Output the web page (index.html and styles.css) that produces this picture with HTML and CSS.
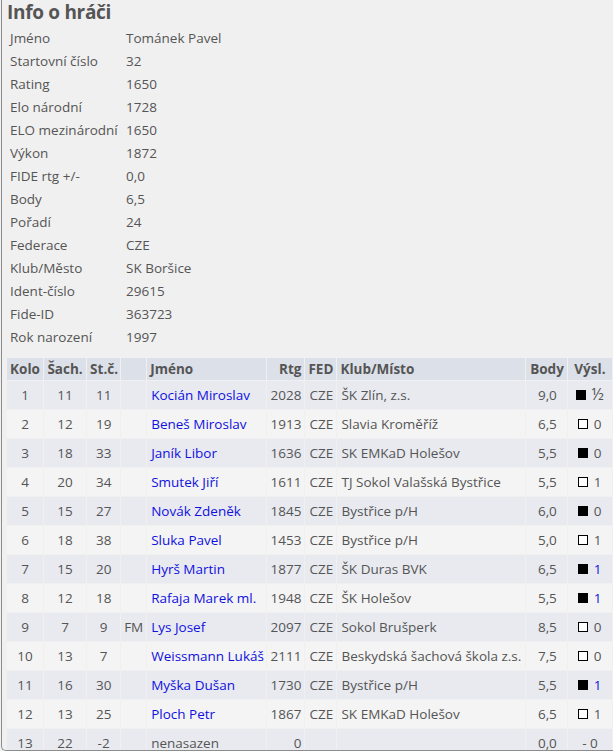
FILE: index.html
```
<!DOCTYPE html>
<html lang="cs">
<head>
<meta charset="utf-8">
<title>Info o hráči</title>
<link rel="stylesheet" href="styles.css">
</head>
<body>
<div class="panel">
  <h2 class="title">Info o hráči</h2>
  <table class="info">
    <tr><td class="lbl">Jméno</td><td>Tománek Pavel</td></tr>
    <tr><td class="lbl">Startovní číslo</td><td>32</td></tr>
    <tr><td class="lbl">Rating</td><td>1650</td></tr>
    <tr><td class="lbl">Elo národní</td><td>1728</td></tr>
    <tr><td class="lbl">ELO mezinárodní</td><td>1650</td></tr>
    <tr><td class="lbl">Výkon</td><td>1872</td></tr>
    <tr><td class="lbl">FIDE rtg +/-</td><td>0,0</td></tr>
    <tr><td class="lbl">Body</td><td>6,5</td></tr>
    <tr><td class="lbl">Pořadí</td><td>24</td></tr>
    <tr><td class="lbl">Federace</td><td>CZE</td></tr>
    <tr><td class="lbl">Klub/Město</td><td>SK Boršice</td></tr>
    <tr><td class="lbl">Ident-číslo</td><td>29615</td></tr>
    <tr><td class="lbl">Fide-ID</td><td>363723</td></tr>
    <tr><td class="lbl">Rok narození</td><td>1997</td></tr>
  </table>
  <table class="games">
    <colgroup>
      <col class="c-kolo"><col class="c-sach"><col class="c-stc"><col class="c-tit"><col class="c-name"><col class="c-rtg"><col class="c-fed"><col class="c-club"><col class="c-body"><col class="c-res">
    </colgroup>
    <thead>
      <tr><th class="ctr">Kolo</th><th class="ctr">Šach.</th><th class="ctr">St.č.</th><th></th><th class="lft">Jméno</th><th class="rgt">Rtg</th><th class="lft">FED</th><th class="lft">Klub/Místo</th><th class="rgt">Body</th><th class="ctr">Výsl.</th></tr>
    </thead>
    <tbody>
      <tr><td class="ctr">1</td><td class="ctr">11</td><td class="ctr">11</td><td class="ctr"></td><td class="lft"><a href="#">Kocián Miroslav</a></td><td class="rgt">2028</td><td class="lft">CZE</td><td class="lft">ŠK Zlín, z.s.</td><td class="pts">9,0</td><td class="ctr"><span class="sq blk"></span> <span class="half">½</span></td></tr>
      <tr><td class="ctr">2</td><td class="ctr">12</td><td class="ctr">19</td><td class="ctr"></td><td class="lft"><a href="#">Beneš Miroslav</a></td><td class="rgt">1913</td><td class="lft">CZE</td><td class="lft">Slavia Kroměříž</td><td class="pts">6,5</td><td class="ctr"><span class="sq wht"></span> 0</td></tr>
      <tr><td class="ctr">3</td><td class="ctr">18</td><td class="ctr">33</td><td class="ctr"></td><td class="lft"><a href="#">Janík Libor</a></td><td class="rgt">1636</td><td class="lft">CZE</td><td class="lft">SK EMKaD Holešov</td><td class="pts">5,5</td><td class="ctr"><span class="sq blk"></span> 0</td></tr>
      <tr><td class="ctr">4</td><td class="ctr">20</td><td class="ctr">34</td><td class="ctr"></td><td class="lft"><a href="#">Smutek Jiří</a></td><td class="rgt">1611</td><td class="lft">CZE</td><td class="lft">TJ Sokol Valašská Bystřice</td><td class="pts">5,5</td><td class="ctr"><span class="sq wht"></span> 1</td></tr>
      <tr><td class="ctr">5</td><td class="ctr">15</td><td class="ctr">27</td><td class="ctr"></td><td class="lft"><a href="#">Novák Zdeněk</a></td><td class="rgt">1845</td><td class="lft">CZE</td><td class="lft">Bystřice p/H</td><td class="pts">6,0</td><td class="ctr"><span class="sq blk"></span> 0</td></tr>
      <tr><td class="ctr">6</td><td class="ctr">18</td><td class="ctr">38</td><td class="ctr"></td><td class="lft"><a href="#">Sluka Pavel</a></td><td class="rgt">1453</td><td class="lft">CZE</td><td class="lft">Bystřice p/H</td><td class="pts">5,0</td><td class="ctr"><span class="sq wht"></span> 1</td></tr>
      <tr><td class="ctr">7</td><td class="ctr">15</td><td class="ctr">20</td><td class="ctr"></td><td class="lft"><a href="#">Hyrš Martin</a></td><td class="rgt">1877</td><td class="lft">CZE</td><td class="lft">ŠK Duras BVK</td><td class="pts">6,5</td><td class="ctr"><span class="sq blk"></span> <span class="blue">1</span></td></tr>
      <tr><td class="ctr">8</td><td class="ctr">12</td><td class="ctr">18</td><td class="ctr"></td><td class="lft"><a href="#">Rafaja Marek ml.</a></td><td class="rgt">1948</td><td class="lft">CZE</td><td class="lft">ŠK Holešov</td><td class="pts">5,5</td><td class="ctr"><span class="sq blk"></span> <span class="blue">1</span></td></tr>
      <tr><td class="ctr">9</td><td class="ctr">7</td><td class="ctr">9</td><td class="ctr">FM</td><td class="lft"><a href="#">Lys Josef</a></td><td class="rgt">2097</td><td class="lft">CZE</td><td class="lft">Sokol Brušperk</td><td class="pts">8,5</td><td class="ctr"><span class="sq wht"></span> 0</td></tr>
      <tr><td class="ctr">10</td><td class="ctr">13</td><td class="ctr">7</td><td class="ctr"></td><td class="lft"><a href="#">Weissmann Lukáš</a></td><td class="rgt">2111</td><td class="lft">CZE</td><td class="lft">Beskydská šachová škola z.s.</td><td class="pts">7,5</td><td class="ctr"><span class="sq wht"></span> 0</td></tr>
      <tr><td class="ctr">11</td><td class="ctr">16</td><td class="ctr">30</td><td class="ctr"></td><td class="lft"><a href="#">Myška Dušan</a></td><td class="rgt">1730</td><td class="lft">CZE</td><td class="lft">Bystřice p/H</td><td class="pts">5,5</td><td class="ctr"><span class="sq blk"></span> <span class="blue">1</span></td></tr>
      <tr><td class="ctr">12</td><td class="ctr">13</td><td class="ctr">25</td><td class="ctr"></td><td class="lft"><a href="#">Ploch Petr</a></td><td class="rgt">1867</td><td class="lft">CZE</td><td class="lft">SK EMKaD Holešov</td><td class="pts">6,5</td><td class="ctr"><span class="sq wht"></span> 1</td></tr>
      <tr><td class="ctr">13</td><td class="ctr">22</td><td class="ctr">-2</td><td class="ctr"></td><td class="lft">nenasazen</td><td class="rgt">0</td><td class="lft"></td><td class="lft"></td><td class="pts">0,0</td><td class="ctr">- 0</td></tr>
    </tbody>
  </table>
</div>
</body>
</html>
```
FILE: styles.css
```
html, body {
  margin: 0;
  padding: 0;
  background: #f0f0f0;
}
body {
  font-family: "Open Sans", "Noto Sans", sans-serif;
  font-size: 13.5px;
  color: #555;
  overflow: hidden;
}
.panel {
  margin-left: 1px;
  height: 750px;
  border-left: 1px solid #8c8c8c;
  border-bottom: 1px solid #8c8c8c;
  border-bottom-left-radius: 5px;
  padding-left: 5px;
  overflow: hidden;
}
.title {
  margin: 0;
  padding-left: 0;
  font-size: 19px;
  font-weight: 700;
  line-height: 24px;
  color: #555;
  letter-spacing: -0.3px;
}
.info {
  border-collapse: collapse;
  margin-top: 2px;
}
.info td {
  height: 23px;
  padding: 0 0 0 3px;
  white-space: nowrap;
  vertical-align: middle;
}
.info td.lbl {
  width: 113px;
}
.games {
  margin-top: 9px;
  margin-left: -1px;
  table-layout: fixed;
  border-collapse: separate;
  border-spacing: 1px;
  width: 607px;
  white-space: nowrap;
}
.c-kolo { width: 36px; }
.c-sach { width: 42px; }
.c-stc { width: 33px; }
.c-tit { width: 25px; }
.c-name { width: 119px; }
.c-rtg { width: 37px; }
.c-fed { width: 31px; }
.c-club { width: 187px; }
.c-body { width: 41px; }
.c-res { width: 44px; }
.games th {
  height: 22px;
  padding: 0 3px;
  background: #dce0e8;
  font-weight: 700;
  color: #555;
  overflow: hidden;
}
.games td {
  height: 28px;
  padding: 0 3px;
  overflow: hidden;
}
.games tbody tr:nth-child(odd) td { background: #e8eaf0; }
.games tbody tr:nth-child(even) td { background: #f4f4f4; }
.ctr { text-align: center; }
.lft { text-align: left; }
.rgt { text-align: right; }
.games td.pts { text-align: right; padding-right: 10px; }
.games td.lft { padding-left: 4px; }
.games th.lft { padding-left: 3px; }
.games a {
  color: #1010e0;
  text-decoration: none;
}
.blue { color: #1010e0; }
.half { font-size: 16px; line-height: 1; }
.sq {
  display: inline-block;
  width: 8px;
  height: 8px;
  border: 1px solid #000;
  vertical-align: 0px;
  margin-right: 2px;
}
.sq.blk { background: #000; }
.sq.wht { background: #fff; }
```
